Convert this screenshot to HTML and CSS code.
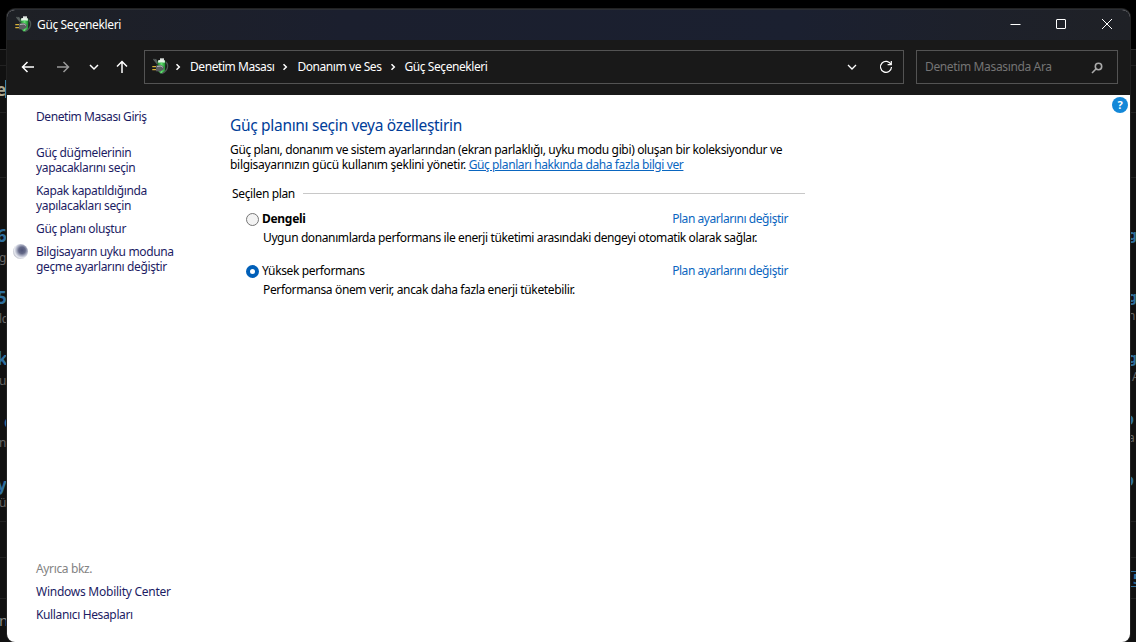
FILE: index.html
```
<!DOCTYPE html>
<html lang="tr">
<head>
  <meta charset="UTF-8" />
  <title>Güç Seçenekleri</title>
  <link rel="stylesheet" href="styles.css">
</head>
<body>
  <!-- arkadaki pencere -->
  <div class="behind">
    <span class="rule r1"></span>
    <span class="rule r2"></span>
    <span class="rule r3"></span>
    <span class="rule r4"></span>
    <span class="rule r5"></span>
    <span class="rule r6"></span>
    <div class="strip left">
      <b class="big cream" style="top:78px">e</b>
      <i class="caret"></i>
      <b class="big" style="top:224px">6</b>
      <span style="top:248px">gü</span>
      <b class="big" style="top:286px">5</b>
      <span style="top:309px">ld</span>
      <b class="big" style="top:347px">k</b>
      <span style="top:371px">u</span>
      <b class="big shift" style="top:410px">c</b>
      <span style="top:433px">n</span>
      <b class="big" style="top:473px">y</b>
      <span style="top:493px">ü</span>
      <span class="mid" style="top:610px">n</span>
    </div>
    <div class="strip right">
      <b style="top:225px">g</b>
      <b style="top:287px">g</b>
      <span style="top:306px">n</span>
      <b style="top:348px">g</b>
      <span class="shift" style="top:367px">A</span>
      <b class="cut" style="top:410px">O</b>
      <span style="top:428px">a</span>
      <b class="cut" style="top:471px">O</b>
      <b class="tag">5</b>
    </div>
  </div>

  <div class="window">
    <header class="titlebar">
      <svg class="plug" viewBox="0 0 17 17"><use href="#plug"/></svg>
      <span class="title">Güç Seçenekleri</span>
      <div class="controls">
        <svg viewBox="0 0 12 12"><path d="M1.500 6.500h10"/></svg>
        <svg viewBox="0 0 12 12"><rect x="1.500" y="1.500" width="9" height="9" rx=".5"/></svg>
        <svg viewBox="0 0 12 12"><path d="M1 1l10 10M11 1L1 11"/></svg>
      </div>
    </header>

    <nav class="toolbar">
      <div class="arrows">
        <svg viewBox="0 0 14 14"><path d="M13 7H1.500M6.500 2l-5 5 5 5"/></svg>
        <svg class="dim" viewBox="0 0 14 14"><path d="M1 7h11.500M7.500 2l5 5-5 5"/></svg>
        <svg class="down" viewBox="0 0 14 14"><path d="M3 5l4 4 4-4"/></svg>
        <svg viewBox="0 0 14 14"><path d="M7 13V1.500M2 6.500l5-5 5 5"/></svg>
      </div>
      <div class="address">
        <svg class="plug" viewBox="0 0 17 17"><use href="#plug"/></svg>
        <svg class="sep first" viewBox="0 0 6 8"><path d="M1.500 1.300L4.300 4 1.500 6.700"/></svg>
        <span class="crumb">Denetim Masası</span>
        <svg class="sep" viewBox="0 0 6 8"><path d="M1.500 1.300L4.300 4 1.500 6.700"/></svg>
        <span class="crumb">Donanım ve Ses</span>
        <svg class="sep" viewBox="0 0 6 8"><path d="M1.500 1.300L4.300 4 1.500 6.700"/></svg>
        <span class="crumb">Güç Seçenekleri</span>
        <svg class="history" viewBox="0 0 14 14"><path d="M3 5l4 4 4-4"/></svg>
        <svg class="refresh" viewBox="0 0 14 14"><path d="M12 4.500A5.500 5.500 0 1 0 12.500 7M12.300 1v3.700H8.600"/></svg>
      </div>
      <div class="search">
        <span>Denetim Masasında Ara</span>
        <svg viewBox="0 0 12 12"><circle cx="7.500" cy="4.500" r="3.200"/><path d="M5.200 6.800L1 11"/></svg>
      </div>
    </nav>

    <div class="body-content">
      <aside>
        <a class="home">Denetim Masası Giriş</a>
        <a>Güç düğmelerinin<br>yapacaklarını seçin</a>
        <a>Kapak kapatıldığında<br>yapılacakları seçin</a>
        <a>Güç planı oluştur</a>
        <a class="sleep"><i class="moon"></i>Bilgisayarın uyku moduna<br>geçme ayarlarını değiştir</a>
        <div class="see-also">
          <span>Ayrıca bkz.</span>
          <a class="mobility">Windows Mobility Center</a>
          <a>Kullanıcı Hesapları</a>
        </div>
      </aside>

      <main>
        <h1>Güç planını seçin veya özelleştirin</h1>
        <p class="intro">Güç planı, donanım ve sistem ayarlarından (ekran parlaklığı, uyku modu gibi) oluşan bir koleksiyondur ve<br><span>bilgisayarınızın gücü kullanım şeklini yönetir. </span><a>Güç planları hakkında daha fazla bilgi ver</a></p>
        <div class="legend"><span>Seçilen plan</span></div>
        <div class="plan">
          <i class="radio"></i><b>Dengeli</b><a>Plan ayarlarını değiştir</a>
          <p class="long">Uygun donanımlarda performans ile enerji tüketimi arasındaki dengeyi otomatik olarak sağlar.</p>
        </div>
        <div class="plan">
          <i class="radio checked"></i><span>Yüksek performans</span><a>Plan ayarlarını değiştir</a>
          <p>Performansa önem verir, ancak daha fazla enerji tüketebilir.</p>
        </div>
      </main>
      <div class="help">?</div>
    </div>
  </div>

  <svg class="defs">
    <defs>
      <linearGradient id="cell" x1="0" x2="1">
        <stop offset="0" stop-color="#1d7a2b"/>
        <stop offset=".5" stop-color="#5fdc6e"/>
        <stop offset="1" stop-color="#17862a"/>
      </linearGradient>
      <g id="plug">
        <path d="M1.500 1l4 5M3.500 1l2 4" stroke="#59605f" stroke-width="1.300" fill="none"/>
        <rect x="8" y=".3" width="4" height="2" fill="#d9dedb"/>
        <path d="M5.500 3q4-2 8 0l-.5 10q-1 2.500-4.500 2.500l-3-3z" fill="url(#cell)"/>
        <path d="M6 2.500q3.500-1.500 7 0l-.3 2.300q-3.200-1-6.400 0z" fill="#e7f3e8"/>
        <path d="M14 4q2.300 2.500 1.300 6t-5.300 5.500" stroke="#4d5653" stroke-width="1.300" fill="none"/>
        <path d="M.3 8.700h3.700M.3 11.700h3.700" stroke="#d6b13a" stroke-width="1.200"/>
        <path d="M4 7.500l5-.5 3 2-.5 2.500-3 2-4.500-.3z" fill="#5a5d60"/>
        <path d="M5 8.500l4-.5 2 1.500" stroke="#b3b6b8" fill="none"/>
      </g>
    </defs>
  </svg>
</body>
</html>
```
FILE: styles.css
```
body {
  margin: 0;
  height: 642px;
  overflow: hidden;
  position: relative;
  background: #000;
  font-family: "Noto Sans", "Open Sans", sans-serif;
  font-size: 12px;
  line-height: 15px;
  letter-spacing: -0.36px;
  color: #000;
}

.defs {
  position: absolute;
  width: 0;
  height: 0;
}

svg {
  fill: none;
  stroke: #fff;
  flex-shrink: 0;
}

/* ===== ARKA PLAN ===== */
.behind {
  position: absolute;
  top: 49px;
  left: 0;
  right: 0;
  bottom: 0;
  background: #111;
  border-top: 1px solid #2a2a2a;
}

.rule {
  position: absolute;
  left: 0;
  right: 0;
  height: 1px;
  background: #222;
}

.r1 { top: 15px; }
.r2 { top: 62px; }
.r3 { top: 127px; }
.r4 { top: 471px; }
.r5 { top: 507px; }
.r6 { top: 548px; }

.strip {
  position: absolute;
  top: -50px;
  height: 642px;
  width: 7px;
  overflow: hidden;
  color: #666;
}

.strip.left { left: 0; }
.strip.right { right: 0; width: 6px; }

.strip span,
.strip b {
  position: absolute;
  left: -2px;
  line-height: 20px;
}

.strip b {
  color: #2f6f9d;
  font-size: 14px;
}

.strip.left span { left: -1px; }
.strip.left .big { font-size: 17px; line-height: 24px; left: -3px; }
.strip.left .cream { color: #aaa58f; left: -4px; }
.strip.left .shift { left: 4px; }
.strip .shift { left: 2px; }
.strip .cut { left: -7px; }
.strip .mid { font-size: 15px; color: #888; }

.caret {
  position: absolute;
  left: 5px;
  top: 80px;
  width: 2px;
  height: 18px;
  background: #3d83a8;
}

.strip .tag {
  top: 571px;
  left: 0;
  width: 8px;
  line-height: 14px;
  padding-left: 3px;
  border: solid #2f6f9d;
  border-width: 1px 0;
}

/* ===== PENCERE ===== */
.window {
  position: absolute;
  left: 7px;
  top: 9px;
  width: 1123px;
  height: 633px;
  box-sizing: border-box;
  display: flex;
  flex-direction: column;
  background: #fff;
  border-top: 1px solid #2b2e34;
  border-radius: 8px;
  overflow: hidden;
  box-shadow: 0 0 0 1px #222;
}

.titlebar {
  height: 30px;
  box-sizing: border-box;
  display: flex;
  align-items: center;
  padding: 0 0 2px 8px;
  background: linear-gradient(90deg, #1e2025, #1b1f2e 30%, #1b2030 70%, #1f2126);
  color: #fff;
}

.plug {
  width: 17px;
  height: 17px;
  stroke: none;
}

.title {
  margin-left: 5px;
}

.controls {
  display: flex;
  gap: 34px;
  margin-left: auto;
  padding-right: 17px;
}

.controls svg {
  width: 12px;
  height: 12px;
}

.toolbar {
  height: 55px;
  box-sizing: border-box;
  display: flex;
  padding: 10px 12px 11px 14px;
  background: #191919;
  color: #fff;
}

.arrows {
  width: 123px;
  display: flex;
  align-items: center;
}

.arrows svg {
  width: 14px;
  height: 14px;
  stroke-width: 1.5;
  margin-right: 21px;
}

.arrows .dim { stroke: #999; margin-right: 17px; }
.arrows .down { margin-right: 14px; }

.address {
  width: 760px;
  box-sizing: border-box;
  display: flex;
  align-items: center;
  border: 1px solid #535353;
  padding: 0 10px 2px 7px;
}

.crumb {
  letter-spacing: -0.43px;
}

.sep {
  width: 6px;
  height: 8px;
  stroke-width: 1.5;
  margin: 1px 9px 0 8px;
}

.sep.first {
  margin-left: 6px;
}

.history {
  width: 14px;
  height: 14px;
  margin: 1px 20px 0 auto;
  stroke-width: 1.3;
}

.refresh {
  width: 14px;
  height: 14px;
  margin-top: 1px;
  stroke-width: 1.2;
}

.search {
  flex: 1;
  margin-left: 12px;
  display: flex;
  align-items: center;
  justify-content: space-between;
  border: 1px solid #535353;
  padding: 0 14px 1px 8px;
  color: #747474;
}

.search svg {
  width: 12px;
  height: 12px;
  margin-top: 2px;
  stroke: #aaa;
  stroke-width: 1.6;
}

.body-content {
  flex: 1;
  display: flex;
  position: relative;
}

aside {
  width: 194px;
  box-sizing: border-box;
  display: flex;
  flex-direction: column;
  padding: 14px 0 20px 29px;
  color: #1c1c64;
}

aside a {
  margin-bottom: 8px;
  white-space: nowrap;
}

aside .home {
  margin-bottom: 21px;
  letter-spacing: -0.43px;
}

aside .mobility {
  letter-spacing: -0.25px;
}

.sleep {
  position: relative;
}

.moon {
  position: absolute;
  left: -23px;
  top: 0;
  width: 15px;
  height: 15px;
  border-radius: 50%;
  background: radial-gradient(circle at 60% 42%, #4f5478 0, #646988 26%, #b4b8ca 46%, #e6e8ef 60%, #b8bac4 78%);
}

.see-also {
  margin-top: auto;
  display: flex;
  flex-direction: column;
}

.see-also span {
  color: #838383;
  margin-bottom: 8px;
}

.see-also a:last-child {
  margin-bottom: 0;
}

main {
  padding: 19px 0 0 29px;
  width: 575px;
}

h1 {
  margin: 0;
  font-size: 15.5px;
  font-weight: normal;
  line-height: 22px;
  letter-spacing: -0.31px;
  color: #003d99;
}

.intro {
  margin: 6px 0 14px;
  white-space: nowrap;
}

.intro span {
  letter-spacing: -0.3px;
}

main a {
  color: #0a66c0;
  letter-spacing: -0.44px;
}

.intro a {
  text-decoration: underline;
  letter-spacing: -0.39px;
}

.legend {
  display: flex;
  align-items: center;
  padding-left: 2px;
}

.legend::after {
  content: "";
  flex: 1;
  height: 1px;
  margin-left: 8px;
  background: #c8c8c8;
}

.plan {
  display: flex;
  flex-wrap: wrap;
  align-items: center;
  padding: 10px 17px 0 16px;
  margin-bottom: 8px;
}

.plan b {
  letter-spacing: -0.3px;
}

.plan a {
  margin-left: auto;
}

.plan p {
  width: 100%;
  margin: 4px 0 0 17px;
  white-space: nowrap;
}

.plan .long {
  letter-spacing: -0.39px;
}

.radio {
  width: 13px;
  height: 13px;
  box-sizing: border-box;
  border: 1px solid #757575;
  border-radius: 50%;
  background: #f3f3f3;
  margin: 2px 3px 0 0;
}

.radio.checked {
  border: 4px solid #005fb8;
  background: #fff;
}

.help {
  position: absolute;
  right: 2px;
  top: 2px;
  width: 16px;
  height: 16px;
  border-radius: 50%;
  background: #1488d8;
  color: #fff;
  font-size: 11px;
  font-weight: bold;
  line-height: 16px;
  text-align: center;
}
```
